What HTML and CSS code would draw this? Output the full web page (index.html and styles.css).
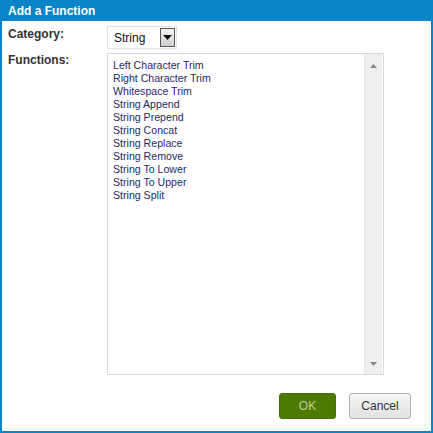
FILE: index.html
```html
<!DOCTYPE html>
<html>
<head>
<meta charset="utf-8">
<link rel="stylesheet" href="styles.css">
</head>
<body>
<div class="dialog">
  <div class="titlebar">Add a Function</div>
  <div class="content">
    <div class="row row-cat">
      <div class="label">Category:</div>
      <div class="select">
        <span class="select-value">String</span>
        <span class="select-btn"><svg width="9" height="6" viewBox="0 0 9 6"><path d="M0 0h9L4.5 5z" fill="#111"/></svg></span>
      </div>
    </div>
    <div class="row row-fn">
      <div class="label">Functions:</div>
      <div class="listbox">
        <ul class="items">
          <li>Left Character Trim</li>
          <li>Right Character Trim</li>
          <li>Whitespace Trim</li>
          <li>String Append</li>
          <li>String Prepend</li>
          <li>String Concat</li>
          <li>String Replace</li>
          <li>String Remove</li>
          <li>String To Lower</li>
          <li>String To Upper</li>
          <li>String Split</li>
        </ul>
        <div class="scrollbar">
          <svg class="arrow" width="7" height="4" viewBox="0 0 7 4"><path d="M3.5 0L7 4H0z" fill="#888"/></svg>
          <svg class="arrow" width="7" height="4" viewBox="0 0 7 4"><path d="M0 0h7L3.5 4z" fill="#888"/></svg>
        </div>
      </div>
    </div>
  </div>
  <div class="footer">
    <button class="btn btn-ok">OK</button>
    <button class="btn btn-cancel">Cancel</button>
  </div>
</div>
</body>
</html>
```

FILE: styles.css
```css
html, body {
  margin: 0;
  padding: 0;
  background: #ffffff;
}
.dialog {
  width: 433px;
  height: 433px;
  box-sizing: border-box;
  border: 2px solid #0984c8;
  border-top: none;
  display: flex;
  flex-direction: column;
  font-family: "Liberation Sans", Arial, sans-serif;
}
.titlebar {
  height: 21px;
  margin: 0 -2px;
  padding-left: 8px;
  background: #0984c8;
  color: #ffffff;
  font-weight: bold;
  font-size: 12px;
  line-height: 22px;
}
.content {
  padding: 5px 0 0 6px;
  display: flex;
  flex-direction: column;
  gap: 4px;
}
.row {
  display: flex;
}
.label {
  width: 99px;
  font-size: 12px;
  font-weight: bold;
  color: #333333;
  line-height: 14px;
}
.row-cat .label {
  padding-top: 1px;
}
.select {
  width: 70px;
  height: 23px;
  box-sizing: border-box;
  border: 1px solid #e2e2e2;
  display: flex;
  align-items: center;
  justify-content: space-between;
  padding: 0 1px 0 6px;
}
.select-value {
  font-size: 12px;
  color: #111;
  padding-top: 1px;
}
.select-btn {
  width: 15px;
  height: 19px;
  box-sizing: border-box;
  border: 1px solid #555;
  background: linear-gradient(#f4f4f4, #cfcfcf);
  display: flex;
  align-items: center;
  justify-content: center;
}
.listbox {
  width: 277px;
  height: 322px;
  box-sizing: border-box;
  border: 1px solid #d8d8d8;
  display: flex;
}
.items {
  list-style: none;
  margin: 0;
  padding: 5px 0 0 5px;
  flex: 1;
}
.items li {
  font-size: 10.6px;
  line-height: 13px;
  color: #1f2a66;
}
.scrollbar {
  width: 17px;
  margin-right: 1px;
  background: #efefef;
  border-left: 1px solid #e6e6e6;
  display: flex;
  flex-direction: column;
  justify-content: space-between;
  align-items: center;
  padding: 10px 0 8px;
}
.footer {
  margin-top: auto;
  display: flex;
  justify-content: flex-end;
  gap: 13px;
  padding: 0 20px 12px 0;
}
.btn {
  height: 26px;
  border-radius: 3px;
  font-family: "Liberation Sans", Arial, sans-serif;
  font-size: 12px;
  padding: 0;
}
.btn-ok {
  width: 57px;
  background: #4d7a00;
  border: 1px solid #46700a;
  color: #bfd199;
}
.btn-cancel {
  width: 62px;
  background: linear-gradient(#f5f5f5, #e2e2e2);
  border: 1px solid #b0b0b0;
  color: #333;
}
```
